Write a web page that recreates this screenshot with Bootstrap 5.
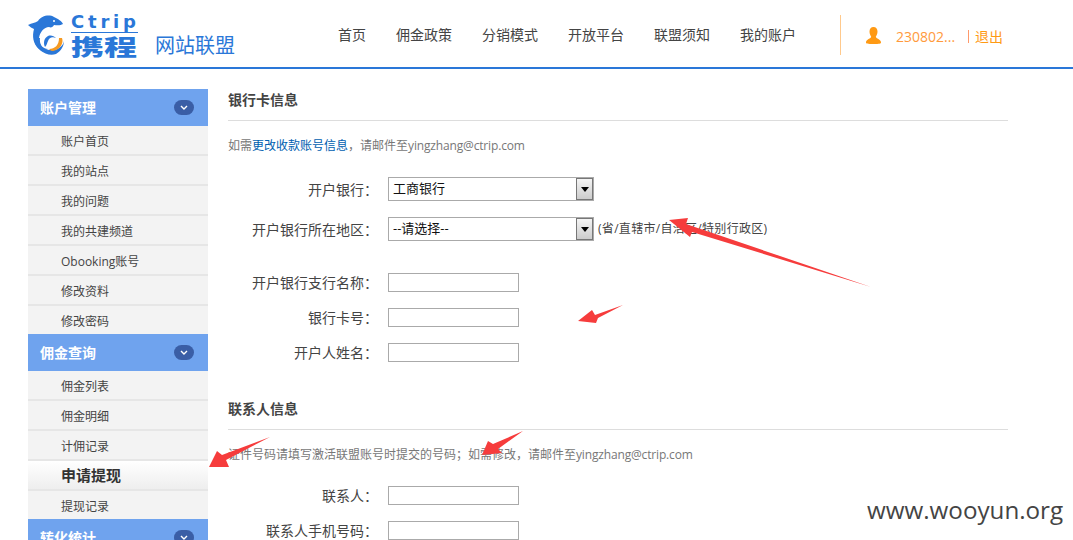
<!DOCTYPE html>
<html lang="zh-CN">
<head>
<meta charset="utf-8">
<title>携程网站联盟</title>
<link rel="stylesheet" href="https://cdn.jsdelivr.net/npm/bootstrap@5.3.0/dist/css/bootstrap.min.css">
<style>
html,body{height:540px;overflow:hidden}
body{font-family:"Open Sans","Noto Sans CJK SC",sans-serif;font-size:14px;color:#444;background:#fff;position:relative}
.topbar{height:69px;border-bottom:2px solid #2a77d8}
.brandbox{width:338px;padding-left:28px}
.brandmark{width:36px;height:42px;margin-top:14px}
.brandtext{width:67px;margin-left:7px;margin-top:12px;color:#2a77d8}
.brandlatin{font-family:"DejaVu Sans",sans-serif;font-weight:700;font-size:18px;line-height:20px;height:21px;letter-spacing:3.8px;border-bottom:1px solid #2a77d8;white-space:nowrap}
.brandcn{font-family:"Noto Sans CJK SC",sans-serif;font-weight:900;font-size:22px;line-height:22px;margin-top:1px;width:44px;white-space:nowrap;transform:scaleX(1.5);transform-origin:left center}
.brandsub{font-family:"Noto Sans CJK SC",sans-serif;color:#2a77d8;font-size:20px;line-height:28px;margin:31px 0 0 17px;white-space:nowrap}
.mainnav{gap:30px;height:67px;padding-top:2px}
.mainnav a{color:#444;text-decoration:none;font-size:14px}
.userarea{margin-left:44px;margin-top:15px;height:40px;border-left:1px solid #ffc98c;padding-left:25px;padding-top:2px;color:#ff9a3c;white-space:nowrap}
.userarea svg{margin-right:15px}
.userarea .logoutlink{color:#ff9a14;text-decoration:none;border-left:1px solid #ff9a6c;padding-left:6px;margin-left:13px;line-height:13px;height:13px;display:inline-flex;align-items:center}
.pagebody{padding:20px 0 0 28px;gap:20px}
.sidemenu{width:180px;flex:none}
.sidehead{height:37px;background:#6fa3ee;color:#fff;font-weight:700;padding:0 14px 0 12px}
.sidepill{width:20px;height:15px;border-radius:8px;background:#3a5ea6}
.sideitem{display:block;height:30px;line-height:31px;padding-left:33px;background:#f3f3f3;border-bottom:2px solid #e6e6e6;color:#444;font-size:12px;text-decoration:none}
.sideitem.lastitem{height:28px;border-bottom:0}
.sideitem.active-item{background:linear-gradient(#fff,#eee);font-weight:700;font-size:15px;color:#333;line-height:29px}
.content{width:780px;flex:none}
.sectiontitle{height:32px;line-height:22px;font-size:14px;font-weight:700;color:#444;border-bottom:1px solid #ddd;margin:0}
.sectiontitle.second{margin-top:36px}
.sectionnote{font-size:12px;line-height:20px;color:#777;margin:15px 0 21px}
.sectionnote a{color:#0060b0;text-decoration:none}
.mailtext{letter-spacing:-.16px}
.fieldrow{display:flex;align-items:center;gap:10px}
.fieldname{width:150px;text-align:right;margin:0;font-size:14px;line-height:19px;color:#444;white-space:nowrap}
.selectbox{position:relative;width:206px;height:24px}
.selectbox select{display:block;width:100%;height:24px;appearance:none;border:1px solid #aaa;border-radius:0;background:#fff;font-size:13px;font-family:inherit;color:#111;padding:0 0 0 4px}
.selectbtn{position:absolute;right:1px;top:1px;width:17px;height:22px;border:1px solid #777;background:linear-gradient(#f4f4f4,#ccc);display:flex;align-items:center;justify-content:center;pointer-events:none}
.selectbtn::after{content:"";border:4px solid transparent;border-top:5px solid #000;border-bottom:0}
.textfield{width:131px;height:19px;border:1px solid #aaa;padding:0 3px;background:#fff}
.hinttext{font-size:12px;letter-spacing:.3px;color:#444;margin-left:-6px;white-space:nowrap}
.gap16{margin-bottom:16px}.gap32{margin-bottom:32px}
.overlayart{position:absolute;left:0;top:0;width:1073px;height:540px;pointer-events:none}
.stampmark{position:absolute;left:867px;top:493px;font-family:"Open Sans",sans-serif;font-size:24.2px;line-height:34px;color:#444;white-space:nowrap}
</style>
</head>
<body>
<header class="topbar d-flex">
  <div class="brandbox d-flex">
    <svg class="brandmark" viewBox="0 0 36 42" aria-hidden="true">
      <path fill="#2a77d8" d="M0 11C4 9 7 9 10 7C13 2 21 0 26 3C30 5 34 7 35 10C32 12 28 11 26 11C25 13 23 14 21 13C16 13 12 18 11 24C11 31 15 35 20 35C17 37 13 35 11 35C5 30 4 22 6 15C4 14 2 13 0 11Z"/>
      <path fill="#2a77d8" d="M6 24C7 36 19 43 28 40C33 37 36 32 36 27C35 33 28 37 22 36C15 36 11 31 12 24Z"/>
      <path fill="#f59a23" d="M21 35C27 35 31 31 31 24L34 24C36 29 32 36 25 37C23 37 22 36 21 35Z"/>
      <path fill="#2a77d8" d="M17 33C15 29 16 24 20 22C23 21 26 22 28 24C24 22 21 24 20 27C19 29 19 31 17 33Z"/>
      <circle cx="26" cy="7" r="1" fill="#fff"/>
    </svg>
    <div class="brandtext">
      <div class="brandlatin">Ctrip</div>
      <div class="brandcn">携程</div>
    </div>
    <div class="brandsub">网站联盟</div>
  </div>
  <nav class="mainnav nav d-flex align-items-center">
    <a href="#">首页</a><a href="#">佣金政策</a><a href="#">分销模式</a><a href="#">开放平台</a><a href="#">联盟须知</a><a href="#">我的账户</a>
  </nav>
  <div class="userarea d-flex align-items-center">
    <svg width="15" height="18" viewBox="0 0 15 18" aria-hidden="true"><path fill="#ff9a14" d="M7.500 0C10 0 11.500 2 11.500 4.500C11.500 7 10.500 8.500 9.800 9.700C9.800 11.500 15 12 15 15.500C15 16.800 13.500 17 7.500 17C1.500 17 0 16.800 0 15.500C0 12 5.200 11.500 5.200 9.700C4.500 8.500 3.500 7 3.500 4.500C3.500 2 5 0 7.500 0Z"/></svg>
    <span>230802...</span><a class="logoutlink" href="#">退出</a>
  </div>
</header>
<div class="pagebody d-flex">
  <aside class="sidemenu">
    <div class="sidehead d-flex align-items-center justify-content-between"><span>账户管理</span><span class="sidepill d-flex align-items-center justify-content-center"><svg width="8" height="5" viewBox="0 0 8 5"><path d="M1 1l3 3 3-3" fill="none" stroke="#fff" stroke-width="1.400"/></svg></span></div>
    <a class="sideitem" href="#">账户首页</a>
    <a class="sideitem" href="#">我的站点</a>
    <a class="sideitem" href="#">我的问题</a>
    <a class="sideitem" href="#">我的共建频道</a>
    <a class="sideitem" href="#">Obooking账号</a>
    <a class="sideitem" href="#">修改资料</a>
    <a class="sideitem lastitem" href="#">修改密码</a>
    <div class="sidehead d-flex align-items-center justify-content-between"><span>佣金查询</span><span class="sidepill d-flex align-items-center justify-content-center"><svg width="8" height="5" viewBox="0 0 8 5"><path d="M1 1l3 3 3-3" fill="none" stroke="#fff" stroke-width="1.400"/></svg></span></div>
    <a class="sideitem" href="#">佣金列表</a>
    <a class="sideitem" href="#">佣金明细</a>
    <a class="sideitem" href="#">计佣记录</a>
    <a class="sideitem active-item" href="#">申请提现</a>
    <a class="sideitem lastitem" href="#">提现记录</a>
    <div class="sidehead d-flex align-items-center justify-content-between"><span>转化统计</span><span class="sidepill d-flex align-items-center justify-content-center"><svg width="8" height="5" viewBox="0 0 8 5"><path d="M1 1l3 3 3-3" fill="none" stroke="#fff" stroke-width="1.400"/></svg></span></div>
  </aside>
  <main class="content">
    <h2 class="sectiontitle">银行卡信息</h2>
    <p class="sectionnote">如需<a href="#">更改收款账号信息</a>，请邮件至<span class="mailtext">yingzhang@ctrip.com</span></p>
    <div class="fieldrow gap16"><label class="fieldname">开户银行：</label><div class="selectbox"><select><option>工商银行</option></select><span class="selectbtn"></span></div></div>
    <div class="fieldrow gap32"><label class="fieldname">开户银行所在地区：</label><div class="selectbox"><select><option>--请选择--</option></select><span class="selectbtn"></span></div><span class="hinttext">(省/直辖市/自治区/特别行政区)</span></div>
    <div class="fieldrow gap16"><label class="fieldname">开户银行支行名称：</label><input class="textfield" type="text"></div>
    <div class="fieldrow gap16"><label class="fieldname">银行卡号：</label><input class="textfield" type="text"></div>
    <div class="fieldrow"><label class="fieldname">开户人姓名：</label><input class="textfield" type="text"></div>
    <h2 class="sectiontitle second">联系人信息</h2>
    <p class="sectionnote">证件号码请填写激活联盟账号时提交的号码；如需修改，请邮件至<span class="mailtext">yingzhang@ctrip.com</span></p>
    <div class="fieldrow gap16"><label class="fieldname">联系人：</label><input class="textfield" type="text"></div>
    <div class="fieldrow"><label class="fieldname">联系人手机号码：</label><input class="textfield" type="text"></div>
  </main>
</div>
<svg class="overlayart" viewBox="0 0 1073 540" aria-hidden="true">
  <g fill="#f63c3c">
    <polygon points="669,220 688,218 686,224 871,287 692,232 690,237"/>
    <polygon points="578,321 592,310 595,315 623,305 598,318 596,323"/>
    <polygon points="209,467 217,451 222,455 270,437 226,460 229,467"/>
    <polygon points="482,455 488,441 493,444 523,431 498,449 502,453"/>
  </g>
</svg>
<div class="stampmark">www.wooyun.org</div>
<script src="https://cdn.jsdelivr.net/npm/bootstrap@5.3.0/dist/js/bootstrap.bundle.min.js"></script>
</body>
</html>
